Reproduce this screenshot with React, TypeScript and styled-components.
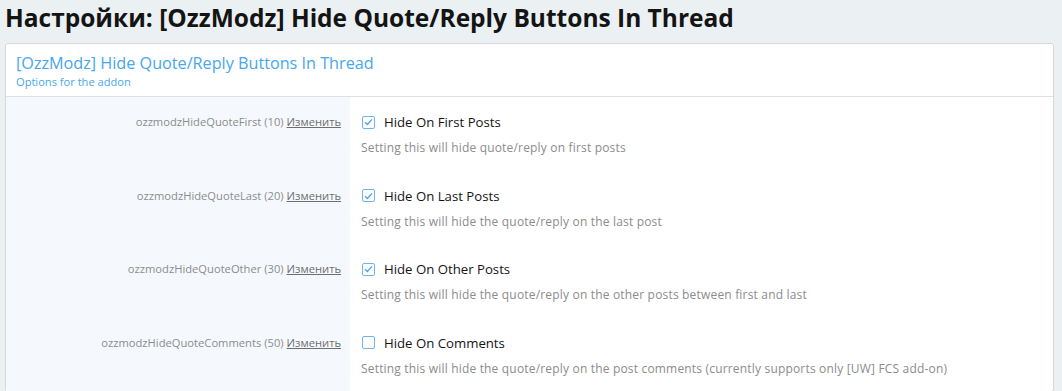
import React from "react";
import styled, { createGlobalStyle } from "styled-components";

const GlobalStyle = createGlobalStyle`
  body {
    margin: 0;
    background: #ebf0f3;
    font-family: "Open Sans", "Noto Sans", sans-serif;
  }
`;

const Page = styled.div`
  padding: 0 8px 0 5px;
  height: 391px;
  overflow: hidden;
`;

const Title = styled.h1`
  margin: 0;
  padding: 1px 0 0 0;
  height: 42px;
  font-size: 24.5px;
  font-weight: 700;
  color: #141414;
  line-height: 34px;
`;

const Panel = styled.div`
  background: #fff;
  border: 1px solid #d8d8d8;
  border-radius: 3px;
`;

const PanelHeader = styled.div`
  padding: 8px 10px 7px;
  border-bottom: 1px solid #e0e0e0;
`;

const PanelTitle = styled.div`
  font-size: 16.2px;
  color: #47a7eb;
  line-height: 22px;
`;

const PanelSub = styled.div`
  font-size: 11.1px;
  color: #47a7eb;
  line-height: 15px;
`;

const Row = styled.div`
  display: grid;
  grid-template-columns: 344px 1fr;
`;

const LabelCell = styled.div`
  background: #f5f9fd;
  text-align: right;
  padding: 17px 9px 0 0;
  font-size: 11.2px;
  color: #8c8c8c;
  line-height: 16px;
`;

const EditLink = styled.a`
  color: #6e6e6e;
  text-decoration: underline;
`;

const ControlCell = styled.div`
  padding: 16px 10px 14.6px 11px;
`;

const CheckLine = styled.label`
  display: flex;
  align-items: center;
  gap: 9px;
  font-size: 13.2px;
  color: #141414;
  line-height: 18px;
`;

const Box = styled.span`
  width: 11px;
  height: 11px;
  border: 1px solid #6fb4ec;
  border-radius: 2px;
  display: flex;
  align-items: center;
  justify-content: center;
  margin-left: 1px;
`;

const Hint = styled.div`
  margin-top: 8px;
  font-size: 12px;
  letter-spacing: 0.18px;
  color: #8c8c8c;
  line-height: 17px;
`;

const rows = [
  { key: "ozzmodzHideQuoteFirst", order: 10, label: "Hide On First Posts", checked: true, hint: "Setting this will hide quote/reply on first posts" },
  { key: "ozzmodzHideQuoteLast", order: 20, label: "Hide On Last Posts", checked: true, hint: "Setting this will hide the quote/reply on the last post" },
  { key: "ozzmodzHideQuoteOther", order: 30, label: "Hide On Other Posts", checked: true, hint: "Setting this will hide the quote/reply on the other posts between first and last" },
  { key: "ozzmodzHideQuoteComments", order: 50, label: "Hide On Comments", checked: false, hint: "Setting this will hide the quote/reply on the post comments (currently supports only [UW] FCS add-on)" },
];

const Check = () => (
  <svg width="9" height="8" viewBox="0 0 9 8">
    <path d="M1 4.2 L3.4 6.4 L8 1.4" fill="none" stroke="#47a7eb" strokeWidth="1.4" />
  </svg>
);

const App: React.FC = () => (
  <Page>
    <GlobalStyle />
    <Title>Настройки: [OzzModz] Hide Quote/Reply Buttons In Thread</Title>
    <Panel>
      <PanelHeader>
        <PanelTitle>[OzzModz] Hide Quote/Reply Buttons In Thread</PanelTitle>
        <PanelSub>Options for the addon</PanelSub>
      </PanelHeader>
      {rows.map((r) => (
        <Row key={r.key}>
          <LabelCell>
            {r.key} ({r.order}) <EditLink href="#">Изменить</EditLink>
          </LabelCell>
          <ControlCell>
            <CheckLine>
              <Box>{r.checked && <Check />}</Box>
              {r.label}
            </CheckLine>
            <Hint>{r.hint}</Hint>
          </ControlCell>
        </Row>
      ))}
    </Panel>
  </Page>
);

export default App;
